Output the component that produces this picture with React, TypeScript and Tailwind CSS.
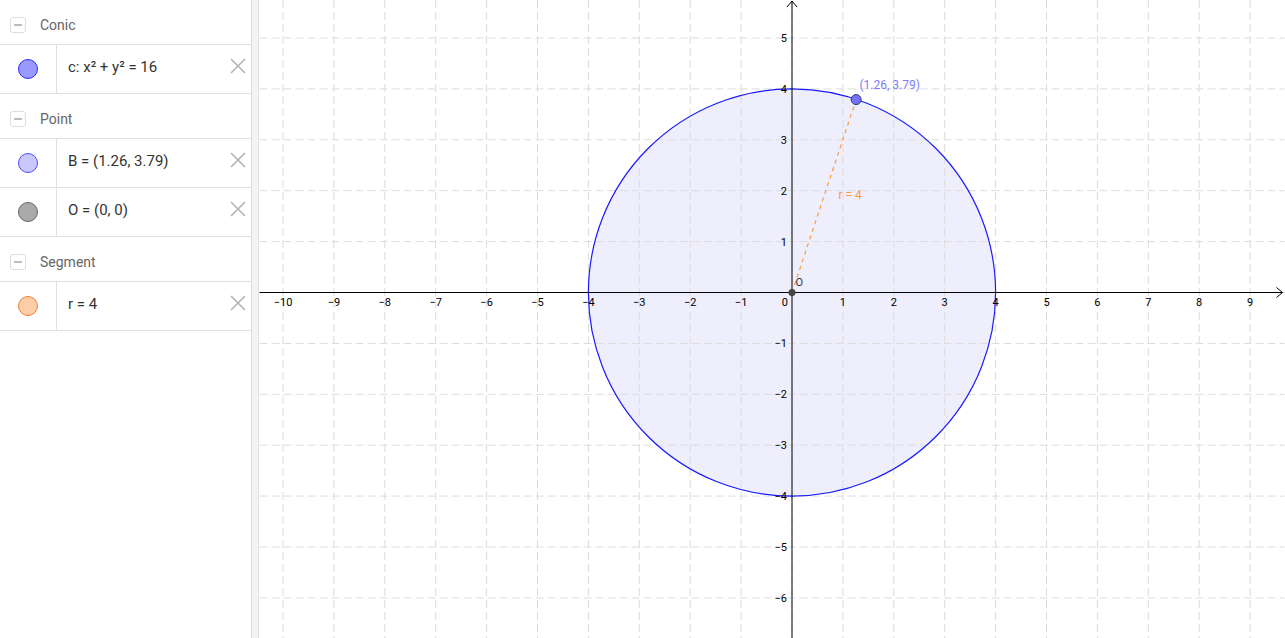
import { ReactNode } from 'react'

const U = 50.9
const OX = 792.5
const OY = 292.5

const px = (x: number) => OX + x * U
const py = (y: number) => OY - y * U

type Item = { fill: string; border: string; text: ReactNode }
type Group = { label: string; items: Item[] }

const groups: Group[] = [
  {
    label: 'Conic',
    items: [{ fill: '#9999ff', border: '#2a2aff', text: <>c: x² + y² = 16</> }],
  },
  {
    label: 'Point',
    items: [
      { fill: '#c8c8ff', border: '#4d4dff', text: <>B = (1.26, 3.79)</> },
      { fill: '#aaaaaa', border: '#666666', text: <>O = (0, 0)</> },
    ],
  },
  {
    label: 'Segment',
    items: [{ fill: '#ffcca8', border: '#e8823a', text: <>r = 4</> }],
  },
]

function CloseIcon() {
  return (
    <svg width="16" height="16" viewBox="0 0 16 16" className="shrink-0 mb-[6px]">
      <path d="M1 1 L15 15 M15 1 L1 15" stroke="#b3b3b3" strokeWidth="1.6" />
    </svg>
  )
}

function Sidebar() {
  return (
    <div className="w-[252px] h-full bg-white border-r border-[#dcdcdc] flex flex-col" style={{ fontFamily: 'Roboto, "Liberation Sans", sans-serif' }}>
      {groups.map((g) => (
        <div key={g.label}>
          {/* group header */}
          <div className="h-[45px] pt-[6px] flex items-center border-b border-[#e0e0e0]">
            <div className="ml-[10px] w-4 h-4 rounded-[3px] border border-[#dddddd] flex items-center justify-center">
              <div className="w-[8px] h-[1.5px] bg-[#bdbdbd]" />
            </div>
            <span className="ml-[14px] text-[14px] text-[#666666]">{g.label}</span>
          </div>
          {g.items.map((it, i) => (
            <div key={i} className="h-[49px] flex border-b border-[#e0e0e0]">
              <div className="w-[57px] h-full flex items-center border-r border-[#e0e0e0] pl-[18px]">
                <div
                  className="w-5 h-5 rounded-full border"
                  style={{ backgroundColor: it.fill, borderColor: it.border }}
                />
              </div>
              <div className="flex-1 flex items-center pl-[11px] pr-[5px]">
                <span className="flex-1 text-[15px] text-[#333333] mb-[3px]">{it.text}</span>
                <CloseIcon />
              </div>
            </div>
          ))}
        </div>
      ))}
    </div>
  )
}

function Graph() {
  const xs = Array.from({ length: 20 }, (_, i) => i - 10)
  const ys = Array.from({ length: 12 }, (_, i) => i - 6)
  const B = { x: px(1.26), y: py(3.79) }

  return (
    <svg
      className="block flex-1 h-full"
      viewBox="260 0 1025 638"
      style={{ fontFamily: 'Roboto, "Liberation Sans", sans-serif' }}
    >
      <rect x="260" y="0" width="1025" height="638" fill="#ffffff" />
      {/* circle fill */}
      <circle cx={OX} cy={OY} r={4 * U} fill="#eeeefd" />
      {/* grid */}
      {xs.map((i) => (
        <line key={'gx' + i} x1={px(i)} y1="0" x2={px(i)} y2="638" stroke="#dcdcdc" strokeDasharray="8 4" />
      ))}
      {ys.map((i) => (
        <line key={'gy' + i} x1="260" y1={py(i)} x2="1285" y2={py(i)} stroke="#dcdcdc" strokeDasharray="8 4" />
      ))}
      {/* circle stroke */}
      <circle cx={OX} cy={OY} r={4 * U} fill="none" stroke="#1a1aff" strokeWidth="1.2" />
      {/* axes */}
      <line x1="260" y1={OY} x2="1283" y2={OY} stroke="#000" />
      <path d={`M1277 ${OY - 5} L1283 ${OY} L1277 ${OY + 5}`} fill="none" stroke="#000" />
      <line x1={OX} y1="638" x2={OX} y2="1" stroke="#000" />
      <path d={`M${OX - 5} 7 L${OX} 1 L${OX + 5} 7`} fill="none" stroke="#000" />
      {/* x labels */}
      {xs.filter((i) => i !== 0).map((i) => (
        <text key={'lx' + i} x={px(i)} y={OY + 13} fontSize="11" fill="#000" textAnchor="middle">
          {i < 0 ? '−' + -i : i}
        </text>
      ))}
      <text x={OX - 4} y={OY + 13} fontSize="11" fill="#000" textAnchor="end">0</text>
      {/* y labels */}
      {ys.filter((i) => i !== 0).map((i) => (
        <text key={'ly' + i} x={OX - 5} y={py(i) + 4} fontSize="11" fill="#000" textAnchor="end">
          {i < 0 ? '−' + -i : i}
        </text>
      ))}
      {/* segment r */}
      <line x1={OX} y1={OY} x2={B.x} y2={B.y} stroke="#ff9b3d" strokeWidth="1.2" strokeDasharray="4 4" />
      <text x="839" y="199" fontSize="12" fill="#ff9b3d">r = 4</text>
      {/* points */}
      <circle cx={OX} cy={OY} r="3.5" fill="#444444" />
      <text x="796" y="286" fontSize="11" fill="#333">O</text>
      <circle cx={B.x} cy={B.y} r="5" fill="#7272ff" stroke="#333366" strokeWidth="1" />
      <text x="860" y="89" fontSize="12" fill="#7b7bff">(1.26, 3.79)</text>
    </svg>
  )
}

export default function App() {
  return (
    <div className="w-[1285px] h-[638px] flex overflow-hidden bg-white">
      <Sidebar />
      <div className="w-[7px] h-full bg-[#f3f3f3] border-r border-[#e2e2e2]" />
      <Graph />
    </div>
  )
}
